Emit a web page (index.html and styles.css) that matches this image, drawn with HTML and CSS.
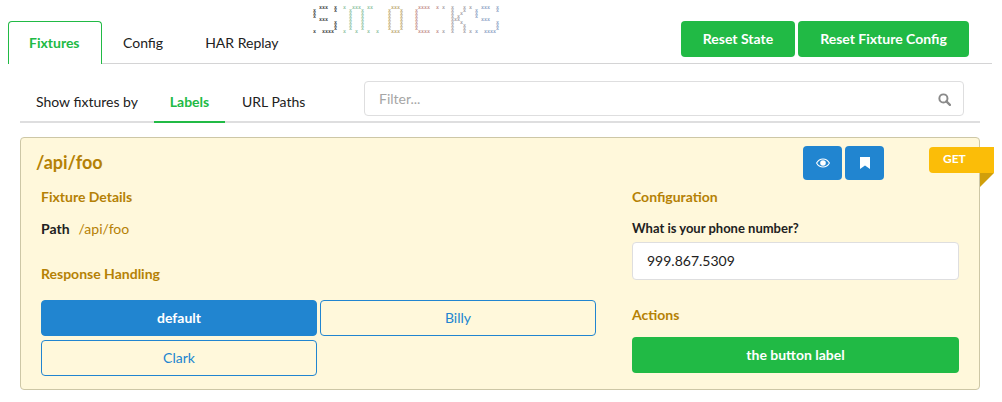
FILE: index.html
```html
<!DOCTYPE html>
<html lang="en">
<head>
<meta charset="utf-8">
<title>Smocks</title>
<link rel="stylesheet" href="styles.css">
</head>
<body>
<header class="topbar">
  <nav class="tabs">
    <a class="tab active">Fixtures</a>
    <a class="tab">Config</a>
    <a class="tab">HAR Replay</a>
  </nav>
  <div class="logo" aria-label="SMOCKS">
<pre class="l-s">  xxx  x
x      x
x
x
  xxx
       x
       x
       x
x  xxxx</pre>
<pre class="l-m">x  xxx  xx
  x   x
  x   x
  x   x
  x   x
  x   x
  x   x
  x   x
x   x   x  x</pre>
<pre class="l-o"> xxx
x   x
x   x
x   x
x   x
x   x
x   x
x   x
 xxx</pre>
<pre class="l-c"> xxxx  x
x
x
x
x
x
x
x
 xxxx  x</pre>
<pre class="l-k">x  x   x x
   x   x
   x  x
   x x
   xxx
   x  x
   x   x
   x   x
x  x   x x</pre>
<pre class="l-b">  xxx  x
x      x
x
x
  xxx
       x
       x
       x
x  xxxx</pre>
  </div>
  <div class="top-actions">
    <button class="btn green reset-state">Reset State</button>
    <button class="btn green reset-config">Reset Fixture Config</button>
  </div>
</header>

<section class="filterbar">
  <div class="subnav">
    <span class="subnav-label">Show fixtures by</span>
    <a class="subtab active">Labels</a>
    <a class="subtab">URL Paths</a>
  </div>
  <div class="filter">
    <span class="filter-text">Filter...</span>
    <svg class="search-icon" viewBox="0 0 24 24" width="13" height="13"><circle cx="10" cy="10" r="7.5" fill="none" stroke="#8a8a8a" stroke-width="3.6"/><path d="M15.5 15.5 22 22" stroke="#8a8a8a" stroke-width="4.2" stroke-linecap="round"/></svg>
  </div>
</section>

<article class="card">
  <div class="card-head">
    <h2 class="card-title">/api/foo</h2>
    <div class="icon-btns">
      <button class="icon-btn"><svg viewBox="0 0 24 16" width="14" height="10"><path fill="none" stroke="#fff" stroke-width="1.800" d="M1 8c2.400-4.400 6.200-7 11-7s8.600 2.600 11 7c-2.400 4.400-6.200 7-11 7S3.400 12.400 1 8z"/><circle cx="12" cy="8" r="4.800" fill="#fff"/></svg></button>
      <button class="icon-btn"><svg viewBox="0 0 10 12" width="10" height="12"><path fill="#fff" d="M0 0h10v12L5 8.600 0 12z"/></svg></button>
    </div>
  </div>
  <div class="ribbon">GET</div>
  <div class="columns">
    <div class="col-left">
      <h3 class="section first">Fixture Details</h3>
      <p class="path-row"><b>Path</b><span>/api/foo</span></p>
      <h3 class="section handling">Response Handling</h3>
      <div class="variants">
        <button class="btn variant selected">default</button>
        <button class="btn variant">Billy</button>
        <button class="btn variant">Clark</button>
      </div>
    </div>
    <div class="col-right">
      <h3 class="section first">Configuration</h3>
      <label class="field-label">What is your phone number?</label>
      <div class="text-input">999.867.5309</div>
      <h3 class="section actions">Actions</h3>
      <button class="btn green action">the button label</button>
    </div>
  </div>
</article>
</body>
</html>
```

FILE: styles.css
```css
* { box-sizing: border-box; }
html, body { margin: 0; padding: 0; }
body {
  width: 1002px;
  height: 402px;
  overflow: hidden;
  background: #fff;
  font-family: Lato, "Liberation Sans", sans-serif;
  font-size: 14px;
  line-height: 20px;
  color: #212121;
}
h2, h3, p { margin: 0; }
button { font-family: inherit; border: 0; padding: 0; }

.topbar {
  position: relative;
  display: flex;
  align-items: flex-start;
  margin: 0 10px 0 8px;
  padding-top: 21px;
  height: 64px;
  border-bottom: 1px solid #d4d4d5;
}
.tabs { display: flex; height: 43px; }
.tab {
  display: flex;
  align-items: center;
  padding: 0 20px 1px;
  height: 43px;
  border: 1px solid transparent;
  border-bottom: 0;
}
.tab.active {
  width: 94px;
  padding-left: 20px;
  color: #21ba45;
  font-weight: 700;
  background: #fff;
  border-color: #21ba45;
  border-radius: 4px 4px 0 0;
}
.logo {
  position: absolute;
  left: 305px;
  top: 6px;
  display: flex;
}
.logo pre {
  margin: 0;
  font-family: "DejaVu Sans Mono", monospace;
  font-size: 5px;
  line-height: 3px;
  font-weight: 700;
}
.l-s { color: #3a3a3a; width: 30px; }
.l-m { color: #8fbfa3; width: 45px; }
.l-o { color: #bda776; width: 27px; }
.l-c { color: #c48f8f; width: 27px; }
.l-k { color: #a59ea8; width: 33px; }
.l-b { color: #8ea0c4; width: 27px; }

.top-actions { margin-left: auto; margin-right: 23px; display: flex; gap: 3px; }
.btn {
  display: block;
  height: 36px;
  padding-bottom: 2px;
  border-radius: 4px;
  font-size: 14px;
  font-weight: 700;
  text-align: center;
}
.green { background: #21ba45; color: #fff; }
.reset-state { width: 114px; }
.reset-config { width: 171px; }

.filterbar {
  display: flex;
  align-items: flex-start;
  margin: 17px 22px 0 20px;
  height: 56px;
}
.subnav {
  display: flex;
  flex: none;
  align-items: stretch;
  width: 960px;
  height: 42px;
  margin-right: -960px;
  border-bottom: 2px solid #dededf;
}
.subnav-label { padding: 11px 0 0 16px; width: 134px; }
.subtab {
  padding: 11px 0 0;
  text-align: center;
  height: 42px;
}
.subtab.active {
  width: 71px;
  color: #21ba45;
  font-weight: 700;
  border-bottom: 2px solid #21ba45;
}
.subtab:last-child { margin-left: 17px; }
.filter {
  position: relative;
  display: flex;
  flex: none;
  align-items: center;
  justify-content: space-between;
  width: 600px;
  height: 35px;
  margin-left: 344px;
  padding: 0 12px 0 14px;
  background: #fff;
  border: 1px solid #dededf;
  border-radius: 4px;
}
.filter-text { color: #a6a6a6; }
.search-icon { display: block; margin-top: 1px; }

.card {
  position: relative;
  width: 960px;
  height: 253px;
  margin-left: 20px;
  background: #fff8db;
  border: 1px solid #cdc7a6;
  border-radius: 4px;
}
.card-head {
  display: flex;
  justify-content: space-between;
  align-items: flex-start;
  padding: 8px 95px 0 15px;
}
.card-title {
  font-size: 18px;
  line-height: 32px;
  font-weight: 700;
  color: #b58105;
}
.icon-btns { display: flex; gap: 3px; }
.icon-btn {
  display: flex;
  align-items: center;
  justify-content: center;
  width: 39px;
  height: 34px;
  background: #2185d0;
  border-radius: 4px;
}
.ribbon {
  position: absolute;
  top: 9px;
  left: 908px;
  width: 65px;
  height: 26px;
  padding: 2px 0 0 14px;
  line-height: 20px;
  font-size: 12px;
  font-weight: 700;
  color: #fff;
  background: #fbbd08;
  border-radius: 4px 0 0 4px;
}
.ribbon::after {
  content: "";
  position: absolute;
  right: 0;
  top: 26px;
  border-style: solid;
  border-width: 14px 14px 0 0;
  border-color: #d09f0b transparent transparent transparent;
}
.columns {
  display: grid;
  grid-template-columns: 555px 327px;
  column-gap: 36px;
  margin: -2px 0 0 20px;
}
.section {
  font-size: 14px;
  line-height: 20px;
  font-weight: 700;
  color: #b58105;
}
.section.first { margin-top: 9px; }
.path-row { margin-top: 12px; display: flex; gap: 9px; color: #b58105; }
.path-row b { color: #212121; font-weight: 700; }
.section.handling { margin-top: 25px; }
.variants {
  display: grid;
  grid-template-columns: 276px 276px;
  column-gap: 3px;
  row-gap: 4px;
  margin-top: 16px;
}
.variant {
  color: #2185d0;
  background: transparent;
  border: 1px solid #2185d0;
  font-weight: 400;
}
.variant.selected { background: #2185d0; color: #fff; font-weight: 700; }
.field-label { display: block; margin-top: 11px; font-size: 13px; font-weight: 700; line-height: 20px; }
.text-input {
  height: 38px;
  margin-top: 4px;
  padding: 8px 14px;
  font-size: 14px;
  background: #fff;
  border: 1px solid #dededf;
  border-radius: 4px;
}
.section.actions { margin-top: 25px; }
.action { width: 327px; margin-top: 12px; }
```
